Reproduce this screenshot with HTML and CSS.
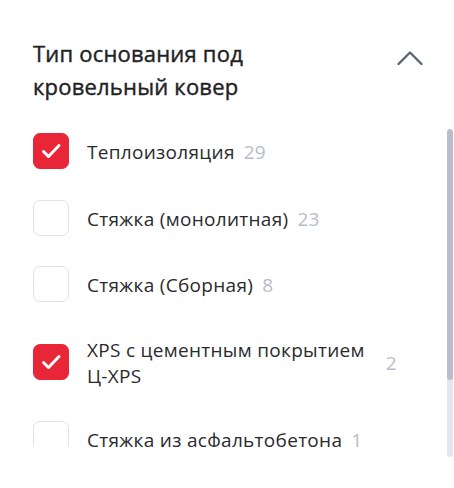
FILE: index.html
```html
<!DOCTYPE html>
<html lang="ru">
<head>
<meta charset="utf-8">
<link rel="stylesheet" href="styles.css">
</head>
<body>
<section class="filter">
  <header class="filter__head">
    <h2 class="filter__title">Тип основания под кровельный ковер</h2>
    <button class="filter__toggle" type="button" aria-label="Свернуть">
      <svg width="28" height="16" viewBox="0 0 28 16"><path d="M2.5 14 L14 2.5 L25.5 14" fill="none" stroke="#5c6272" stroke-width="2.3" stroke-linecap="round" stroke-linejoin="round"/></svg>
    </button>
  </header>
  <div class="filter__body">
    <ul class="options">
      <li class="option">
        <span class="box box--checked"><svg width="36" height="36" viewBox="0 0 36 36"><path d="M10.5 18.5 L15.5 23.5 L26 12.5" fill="none" stroke="#fff" stroke-width="3" stroke-linecap="round" stroke-linejoin="round"/></svg></span>
        <span class="label"><span class="label__text">Теплоизоляция</span><span class="label__count">29</span></span>
      </li>
      <li class="option">
        <span class="box"></span>
        <span class="label"><span class="label__text">Стяжка (монолитная)</span><span class="label__count">23</span></span>
      </li>
      <li class="option">
        <span class="box"></span>
        <span class="label"><span class="label__text">Стяжка (Сборная)</span><span class="label__count">8</span></span>
      </li>
      <li class="option">
        <span class="box box--checked"><svg width="36" height="36" viewBox="0 0 36 36"><path d="M10.5 18.5 L15.5 23.5 L26 12.5" fill="none" stroke="#fff" stroke-width="3" stroke-linecap="round" stroke-linejoin="round"/></svg></span>
        <span class="label"><span class="label__text">XPS с цементным покрытием Ц-XPS</span><span class="label__count">2</span></span>
      </li>
      <li class="option">
        <span class="box"></span>
        <span class="label"><span class="label__text">Стяжка из асфальтобетона</span><span class="label__count">1</span></span>
      </li>
    </ul>
    <div class="scrollbar"><div class="scrollbar__thumb"></div></div>
  </div>
</section>
</body>
</html>
```
FILE: styles.css
```css
html, body {
  margin: 0;
  padding: 0;
  background: #fff;
}

.filter {
  font-family: "Open Sans", "DejaVu Sans", sans-serif;
  color: #2a2a2c;
  padding-left: 33px;
  width: 421px;
}

.filter__head {
  display: flex;
  justify-content: space-between;
  align-items: flex-start;
  padding-top: 37px;
  padding-right: 30px;
}

.filter__title {
  margin: 0;
  max-width: 300px;
  font-size: 22px;
  line-height: 33px;
  font-weight: 400;
  letter-spacing: 0.2px;
  color: #222224;
  -webkit-text-stroke: 0.4px #222224;
}

.filter__toggle {
  margin: 13px 0 0;
  padding: 0;
  border: 0;
  background: none;
  display: block;
  line-height: 0;
}

.filter__body {
  display: flex;
  align-items: flex-start;
  margin-top: 26px;
}

.options {
  list-style: none;
  margin: 0;
  padding: 4px 0 0;
  flex: 1;
  height: 314px;
  overflow: hidden;
  display: flex;
  flex-direction: column;
  gap: 30.5px;
  padding-right: 50px;
}

.option {
  display: flex;
  align-items: center;
  gap: 18px;
  min-height: 36px;
  flex-shrink: 0;
}

.box {
  flex: 0 0 36px;
  width: 36px;
  height: 36px;
  box-sizing: border-box;
  border: 1px solid #dfe2ea;
  border-radius: 7px;
  background: #fff;
  display: block;
}

.box svg {
  display: block;
  margin: -1px;
}

.box--checked {
  background: #e92638;
  border-color: #e92638;
}

.label {
  display: flex;
  align-items: center;
  padding: 4px 0 2px;
  font-size: 19px;
  line-height: 26px;
  letter-spacing: 0.3px;
  min-width: 0;
}

.label__text {
  flex: 0 1 auto;
  min-width: 0;
}

.label__count {
  flex: 0 0 auto;
  margin-left: 9px;
  color: #b9bccb;
}

.scrollbar {
  flex: 0 0 6px;
  width: 6px;
  height: 328px;
  margin-right: 1px;
  border-radius: 3px;
  background: #e4e6ef;
  overflow: hidden;
}

.scrollbar__thumb {
  height: 251px;
  border-radius: 3px;
  background: #b9bccb;
}
```
